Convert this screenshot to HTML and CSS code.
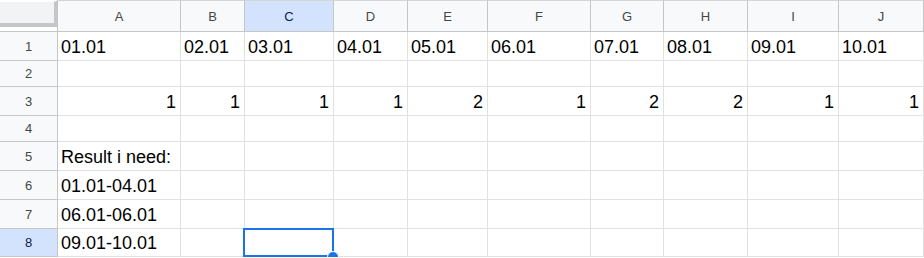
FILE: index.html
```html
<!DOCTYPE html>
<html>
<head>
<meta charset="utf-8">
<link rel="stylesheet" href="styles.css">
</head>
<body>
<div class="sheet">
  <div class="corner"><div class="freeze"></div></div>
  <div class="ch">A</div><div class="ch">B</div><div class="ch sel">C</div><div class="ch">D</div><div class="ch">E</div><div class="ch">F</div><div class="ch">G</div><div class="ch">H</div><div class="ch">I</div><div class="ch">J</div>

  <div class="rh">1</div>
  <div class="c">01.01</div><div class="c">02.01</div><div class="c">03.01</div><div class="c">04.01</div><div class="c">05.01</div><div class="c">06.01</div><div class="c">07.01</div><div class="c">08.01</div><div class="c">09.01</div><div class="c">10.01</div>

  <div class="rh">2</div>
  <div class="c"></div><div class="c"></div><div class="c"></div><div class="c"></div><div class="c"></div><div class="c"></div><div class="c"></div><div class="c"></div><div class="c"></div><div class="c"></div>

  <div class="rh">3</div>
  <div class="c num">1</div><div class="c num">1</div><div class="c num">1</div><div class="c num">1</div><div class="c num">2</div><div class="c num">1</div><div class="c num">2</div><div class="c num">2</div><div class="c num">1</div><div class="c num">1</div>

  <div class="rh">4</div>
  <div class="c"></div><div class="c"></div><div class="c"></div><div class="c"></div><div class="c"></div><div class="c"></div><div class="c"></div><div class="c"></div><div class="c"></div><div class="c"></div>

  <div class="rh">5</div>
  <div class="c over">Result i need:</div><div class="c"></div><div class="c"></div><div class="c"></div><div class="c"></div><div class="c"></div><div class="c"></div><div class="c"></div><div class="c"></div><div class="c"></div>

  <div class="rh">6</div>
  <div class="c">01.01-04.01</div><div class="c"></div><div class="c"></div><div class="c"></div><div class="c"></div><div class="c"></div><div class="c"></div><div class="c"></div><div class="c"></div><div class="c"></div>

  <div class="rh">7</div>
  <div class="c">06.01-06.01</div><div class="c"></div><div class="c"></div><div class="c"></div><div class="c"></div><div class="c"></div><div class="c"></div><div class="c"></div><div class="c"></div><div class="c"></div>

  <div class="rh sel">8</div>
  <div class="c">09.01-10.01</div><div class="c"></div><div class="c active"><div class="cursor"><div class="handle"></div></div></div><div class="c"></div><div class="c"></div><div class="c"></div><div class="c"></div><div class="c"></div><div class="c"></div><div class="c"></div>
</div>
</body>
</html>
```

FILE: styles.css
```css
html, body {
  margin: 0;
  padding: 0;
  background: #ffffff;
  overflow: hidden;
}

.sheet {
  display: grid;
  grid-template-columns: 58px 123px 64px 89px 74px 80px 103px 73px 84px 91px 85px;
  grid-template-rows: 32px 29px 26px 29px 26px 29px 29px 29px 28px;
  width: 924px;
  font-family: "Liberation Sans", Arial, sans-serif;
}

.sheet > div {
  box-sizing: border-box;
}

.corner {
  background: #ffffff;
  border-right: 1px solid #c4c7c5;
  border-bottom: 1px solid #c4c7c5;
}

.freeze {
  height: 27px;
  background: #f1f3f4;
  border-top: 2px solid #ffffff;
  border-right: 4px solid #c4c7c5;
  border-bottom: 4px solid #c4c7c5;
  box-sizing: border-box;
  margin-right: -1px;
}

.ch {
  display: flex;
  align-items: center;
  justify-content: center;
  background: #f8f9fa;
  border-top: 1px solid #d4d6d6;
  border-right: 1px solid #c4c7c5;
  border-bottom: 1px solid #c4c7c5;
  color: #444746;
  font-size: 13px;
  line-height: 15px;
}

.rh {
  display: flex;
  align-items: center;
  justify-content: center;
  background: #f8f9fa;
  border-right: 1px solid #c4c7c5;
  border-bottom: 1px solid #c4c7c5;
  color: #444746;
  font-size: 13px;
  line-height: 15px;
}

.ch.sel, .rh.sel {
  background: #d3e3fd;
  color: #0b1f4a;
}

.c {
  display: flex;
  align-items: flex-end;
  justify-content: flex-start;
  padding: 0 4px 3px 3px;
  border-right: 1px solid #e1e1e1;
  border-bottom: 1px solid #e1e1e1;
  color: #000000;
  font-size: 18px;
  line-height: 20px;
  white-space: nowrap;
}

.c.num {
  justify-content: flex-end;
}

.c.active {
  position: relative;
}

.cursor {
  position: absolute;
  left: -2px;
  right: -1px;
  top: -1px;
  bottom: -1px;
  border: 2px solid #1a73e8;
}

.handle {
  position: absolute;
  right: -7px;
  bottom: -8px;
  width: 10px;
  height: 10px;
  border-radius: 50%;
  background: #1a73e8;
  border: 1px solid #ffffff;
}
```
